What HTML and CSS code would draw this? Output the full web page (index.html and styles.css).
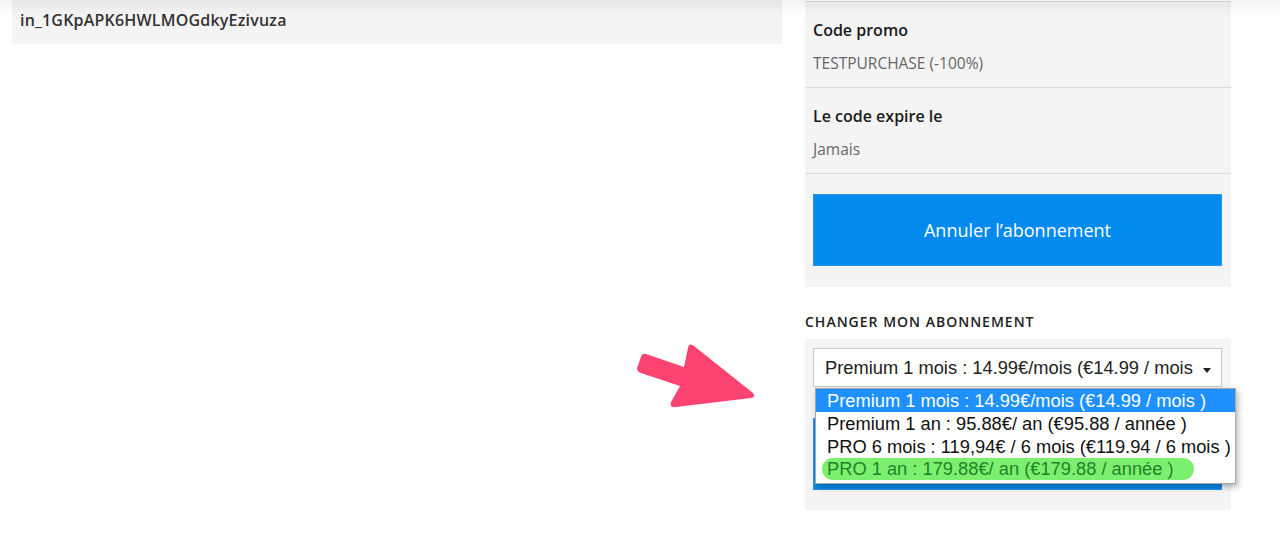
FILE: index.html
```html
<!DOCTYPE html>
<html lang="fr">
<head>
    <meta charset="UTF-8">
    <meta name="viewport" content="width=device-width, initial-scale=1.0">
    <title>Mon abonnement</title>
    <link rel="stylesheet" href="styles.css">
</head>
<body>
    <div class="top-shade"></div>

    <div class="page">
        <!-- colonne gauche : facture -->
        <div class="left-col">
            <div class="invoice-id">in_1GKpAPK6HWLMOGdkyEzivuza</div>
        </div>

        <!-- colonne droite : abonnement -->
        <div class="right-col">
            <div class="panel">
                <div class="info-row">
                    <div class="info-label">Code promo</div>
                    <div class="info-value">TESTPURCHASE (-100%)</div>
                </div>
                <div class="info-row">
                    <div class="info-label">Le code expire le</div>
                    <div class="info-value">Jamais</div>
                </div>
                <div class="panel-actions">
                    <button class="btn-primary">Annuler l’abonnement</button>
                </div>
            </div>

            <h3 class="section-title">Changer mon abonnement</h3>

            <div class="panel panel-change">
                <div class="select-wrap">
                    <div class="fake-select">
                        <span class="fake-select-text">Premium 1 mois : 14.99€/mois (€14.99 / mois )</span>
                        <span class="fake-select-arrow"></span>
                    </div>
                    <ul class="select-list">
                        <li class="selected">Premium 1 mois : 14.99€/mois (€14.99 / mois )</li>
                        <li>Premium 1 an : 95.88€/ an (€95.88 / année )</li>
                        <li>PRO 6 mois : 119,94€ / 6 mois (€119.94 / 6 mois )</li>
                        <li><span class="marker">PRO 1 an : 179.88€/ an (€179.88 / année )</span></li>
                    </ul>
                </div>
                <button class="btn-primary btn-validate">Valider</button>
            </div>
        </div>
    </div>

    <!-- flèche d'annotation -->
    <svg class="annot-arrow" width="130" height="80" viewBox="0 0 130 80">
        <path d="M12 14 Q8 13 7 17 L3 28 Q3 32 7 33 L46 46 L37 62 Q35 68 42 67 L117 58 Q122 57 119 53 L60 6 Q55 2 54 8 L50 27 Z" fill="#fd4470"/>
    </svg>
</body>
</html>
```

FILE: styles.css
```css
body {
    margin: 0;
    background-color: #fff;
    font-family: 'Open Sans', Lato, sans-serif;
    color: #222;
}
.top-shade {
    position: fixed;
    top: 0;
    left: 0;
    right: 0;
    height: 16px;
    background: linear-gradient(rgba(0, 0, 0, 0.05), rgba(0, 0, 0, 0));
    pointer-events: none;
    z-index: 5;
}
.page {
    display: flex;
    gap: 23px;
    padding-left: 12px;
}
.left-col {
    width: 770px;
}
.invoice-id {
    background-color: #f4f4f4;
    padding: 10px 8px 14px;
    font-size: 16px;
    line-height: 20px;
    font-weight: 600;
    letter-spacing: 0.2px;
    color: #333;
}
.right-col {
    width: 426px;
}
.panel {
    background-color: #f4f4f4;
}
.info-row {
    border-top: 1px solid #dcdcdc;
    padding: 18px 8px 14px;
}
.info-row:first-child {
    margin-top: 1px;
}
.info-label {
    font-size: 16px;
    line-height: 20px;
    font-weight: 600;
    color: #1a1a1a;
    margin-bottom: 13px;
}
.info-value {
    font-size: 15.5px;
    line-height: 20px;
    color: #666;
}
.panel-actions {
    border-top: 1px solid #dcdcdc;
    padding: 20px 9px 21px 8px;
}
.btn-primary {
    display: block;
    width: 100%;
    height: 72px;
    border: 1px solid #2d93ef;
    background-color: #038aee;
    color: #fff;
    font-family: 'Open Sans', Lato, sans-serif;
    font-size: 18px;
    cursor: pointer;
}
.section-title {
    margin: 25px 0 7px;
    font-size: 14px;
    line-height: 20px;
    font-weight: 600;
    text-transform: uppercase;
    letter-spacing: 1px;
    color: #222;
}
.panel-change {
    padding: 9px 9px 20px 8px;
}
.select-wrap {
    position: relative;
}
.fake-select {
    display: flex;
    align-items: center;
    height: 39px;
    box-sizing: border-box;
    padding: 0 10px 0 11px;
    background-color: #fff;
    border: 1px solid #c8c8c8;
    font-family: 'Liberation Sans', Arial, sans-serif;
    font-size: 18.3px;
    color: #222;
}
.fake-select-text {
    flex: 1;
    overflow: hidden;
    white-space: nowrap;
}
.fake-select-arrow {
    width: 0;
    height: 0;
    margin-left: 9px;
    margin-top: 5px;
    border-left: 4px solid transparent;
    border-right: 4px solid transparent;
    border-top: 5px solid #222;
}
.btn-validate {
    margin-top: 31px;
    color: transparent;
}
.select-list {
    position: absolute;
    top: 40px;
    left: 2px;
    min-width: 419px;
    margin: 0;
    padding: 0 0 2px;
    list-style: none;
    background-color: #fff;
    border: 1px solid #a8a8a8;
    box-shadow: 2px 3px 6px rgba(0, 0, 0, 0.3);
    font-family: 'Liberation Sans', Arial, sans-serif;
    font-size: 18.3px;
    color: #111;
    z-index: 2;
}
.select-list li {
    height: 23px;
    line-height: 23px;
    padding: 0 2px 0 11px;
    white-space: nowrap;
    overflow: hidden;
}
.select-list li.selected {
    background-color: #1e90ff;
    color: #fff;
}
.marker {
    display: inline-block;
    vertical-align: top;
    margin-left: -5px;
    padding: 0 20px 0 5px;
    background-color: #7cf06e;
    border-radius: 11px;
    color: #23822a;
    line-height: 22px;
}
.annot-arrow {
    position: absolute;
    left: 634px;
    top: 340px;
}
```
